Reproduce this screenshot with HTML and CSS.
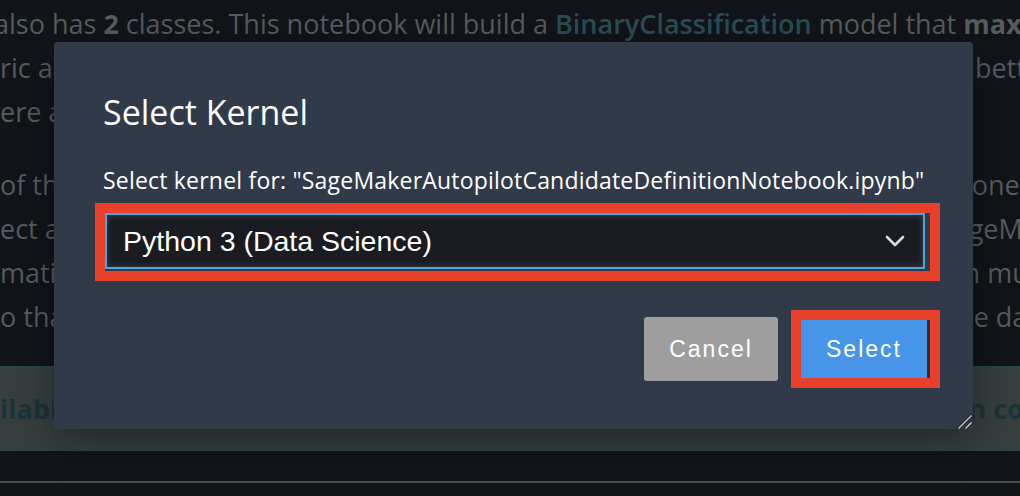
FILE: index.html
```html
<!DOCTYPE html>
<html lang="en">
<head>
<meta charset="utf-8">
<title>Select Kernel</title>
<link rel="stylesheet" href="styles.css">
</head>
<body>
<div class="page">
  <div class="nb">
    <div class="para">
      <div class="line first">also has <b>2</b> classes. This notebook will build a <span class="kw">BinaryClassification</span> model that <b>maximizes</b></div>
      <div class="line split"><span>ric and</span><span>a better</span></div>
      <div class="line split"><span>ere are</span><span></span></div>
    </div>
    <div class="para">
      <div class="line split"><span>of the</span><span>one of</span></div>
      <div class="line split"><span>ect a</span><span>SageMak</span></div>
      <div class="line split"><span>mation</span><span>in multi</span></div>
      <div class="line split"><span>o that</span><span>the data</span></div>
    </div>
    <div class="note"><span>ilable</span><span>an conf</span></div>
  </div>
  <div class="footer"></div>
</div>

<div class="dialog" role="dialog" aria-labelledby="dlg-title">
  <h1 class="dialog-title" id="dlg-title">Select Kernel</h1>
  <div class="dialog-label">Select kernel for: "SageMakerAutopilotCandidateDefinitionNotebook.ipynb"</div>
  <div class="hl hl-field">
    <div class="select">
      <span class="select-value">Python 3 (Data Science)</span>
      <svg class="chevron" width="20" height="12" viewBox="0 0 20 12"><path d="M2 2 L10 10 L18 2" fill="none" stroke="#d8dadd" stroke-width="2.6" stroke-linecap="round" stroke-linejoin="round"/></svg>
    </div>
  </div>
  <div class="actions">
    <button class="btn btn-cancel">Cancel</button>
    <div class="hl hl-btn">
      <button class="btn btn-select">Select</button>
    </div>
  </div>
  <svg class="resize" width="16" height="16" viewBox="0 0 16 16"><path d="M2 15 L14 3 M9 15 L14 10" stroke="#1a1d22" stroke-width="3.2" stroke-linecap="square"/><path d="M2 15 L14 3 M9 15 L14 10" stroke="#b9bdc5" stroke-width="1.6" stroke-linecap="square"/></svg>
</div>
</body>
</html>
```
FILE: styles.css
```css
html, body {
  margin: 0;
  padding: 0;
}
body {
  width: 1020px;
  height: 496px;
  overflow: hidden;
  background: #111419;
  position: relative;
}
.page {
  font-family: "Open Sans", "Noto Sans", sans-serif;
}
.nb {
  padding-top: 2px;
  color: #575a5e;
  font-size: 27px;
}
.para + .para {
  margin-top: 29px;
}
.line {
  height: 44px;
  line-height: 44px;
  white-space: nowrap;
}
.line b {
  font-weight: 700;
}
.line.first {
  margin-left: -6px;
}
.kw {
  color: #2a4c54;
  font-weight: 600;
}
.split {
  display: flex;
  justify-content: space-between;
  width: 1052px;
}
.note {
  margin-top: 27px;
  height: 83px;
  line-height: 83px;
  background: #363e3e;
  border-top: 1px solid #2c4646;
  border-bottom: 1px solid #2c4646;
  display: flex;
  justify-content: space-between;
  width: 1052px;
  color: #1b3438;
  font-weight: 700;
  white-space: nowrap;
}
.footer {
  height: 30px;
  border-bottom: 2px solid #4a4b4d;
}

/* dialog overlay */
.dialog {
  position: absolute;
  left: 54px;
  top: 42px;
  width: 919px;
  height: 387px;
  box-sizing: border-box;
  padding: 51px 33px 0 49px;
  background: #313a49;
  border-radius: 4px;
  box-shadow: 0 12px 40px rgba(0, 0, 0, 0.35);
  font-family: "Open Sans", "Noto Sans", sans-serif;
  color: #ffffff;
}
.dialog-title {
  margin: 0;
  font-size: 34px;
  font-weight: 400;
  line-height: 38px;
  height: 38px;
}
.dialog-label {
  margin-top: 36px;
  font-size: 23px;
  letter-spacing: 0.2px;
  line-height: 26px;
  white-space: nowrap;
}
.hl {
  border: 10px solid #e8402a;
}
.hl-field {
  margin-top: 10px;
  margin-left: -8px;
  padding: 0 5px 2px 0;
}
.select {
  height: 56px;
  box-sizing: border-box;
  border: 2px solid #4aa7de;
  background: #1a1c21;
  box-shadow: inset 0 0 6px rgba(120, 140, 160, 0.35);
  display: flex;
  align-items: center;
  justify-content: space-between;
  padding: 0 18px 0 16px;
}
.select-value {
  font-family: "Liberation Sans", Arial, sans-serif;
  font-size: 28.5px;
  color: #ffffff;
}
.chevron {
  display: block;
}
.actions {
  margin-top: 29px;
  display: flex;
  justify-content: flex-end;
  align-items: center;
  gap: 13px;
}
.btn {
  font-family: "Liberation Sans", Arial, sans-serif;
  font-size: 23px;
  letter-spacing: 2px;
  color: #ffffff;
  border: none;
  padding: 0;
  margin: 0;
}
.btn-cancel {
  width: 134px;
  height: 64px;
  background: #9e9e9e;
  border-radius: 3px;
}
.hl-btn {
  display: flex;
}
.btn-select {
  width: 129px;
  height: 58px;
  background: #4695e8;
  border-right: 3px solid #262f3c;
}
.resize {
  position: absolute;
  right: 0;
  bottom: 0;
}
```
